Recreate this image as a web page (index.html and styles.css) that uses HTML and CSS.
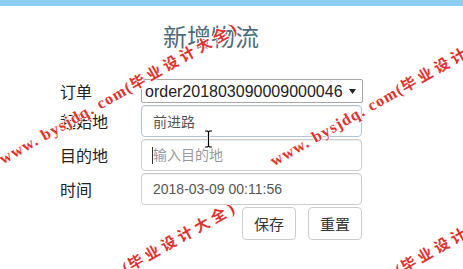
FILE: index.html
```html
<!DOCTYPE html>
<html lang="zh-CN">
<head>
    <meta charset="UTF-8">
    <meta name="viewport" content="width=device-width, initial-scale=1.0">
    <title>新增物流</title>
    <link rel="stylesheet" href="styles.css">
</head>
<body>

<div class="topbar"></div>

<div class="page">
    <h2 class="title">新增物流</h2>

    <form class="logistics-form" onsubmit="return false">
        <label for="order">订单</label>
        <div class="select-wrap">
            <select id="order" class="order-select">
                <option>order201803090009000046</option>
            </select>
            <svg class="select-arrow" width="7" height="5" viewBox="0 0 7 5"><path d="M0 0h7L3.5 5z" fill="#222"/></svg>
        </div>

        <label for="from">起始地</label>
        <input type="text" id="from" class="form-control is-hover" value="前进路">

        <label for="to">目的地</label>
        <div class="field">
            <input type="text" id="to" class="form-control" placeholder="输入目的地">
            <span class="caret"></span>
        </div>

        <label for="time">时间</label>
        <input type="text" id="time" class="form-control" value="2018-03-09 00:11:56">

        <div class="actions">
            <button type="submit" class="btn">保存</button>
            <button type="reset" class="btn">重置</button>
        </div>
    </form>
</div>

<!-- marca d'agua do site -->
<div class="watermarks">
    <span class="wm wm-1">www. bysjdq. com(<span class="wm-cn">毕业设计大全</span>)</span>
    <span class="wm wm-2">www. bysjdq. com(<span class="wm-cn">毕业设计大全</span>)</span>
    <span class="wm wm-3">www. bysjdq. com(<span class="wm-cn">毕业设计大全</span>)</span>
    <span class="wm wm-4">www. bysjdq. com(<span class="wm-cn">毕业设计大全</span>)</span>
    <svg class="ibeam" width="9" height="18" viewBox="0 0 9 18">
        <path d="M1 1h2.5l1 1 1-1H8M4.5 2v14M1 17h2.5l1-1 1 1H8" fill="none" stroke="#fff" stroke-width="3"/>
        <path d="M1 1h2.5l1 1 1-1H8M4.5 2v14M1 17h2.5l1-1 1 1H8" fill="none" stroke="#000" stroke-width="1.2"/>
    </svg>
</div>

</body>
</html>
```

FILE: styles.css
```css
body {
    margin: 0;
    font-family: "Liberation Sans", "Noto Sans CJK SC", Arial, sans-serif;
    font-size: 16px;
    color: #333;
    background-color: #fff;
    position: relative;
    height: 269px;
}
.topbar {
    height: 6px;
    background-color: #89cdf1; /* faixa azul do topo */
}
.page {
    width: 302px;
    margin-left: 60px;
}
.title {
    margin: 17px 0 0;
    font-size: 24px;
    font-weight: normal;
    line-height: 30px;
    text-align: center;
    color: #4f6b79;
}
.logistics-form {
    display: grid;
    grid-template-columns: 81px 221px;
    row-gap: 2px;
    align-items: center;
    margin-top: 26px;
}
.logistics-form label {
    font-size: 16px;
    color: #222;
}
.select-wrap {
    position: relative;
}
.order-select {
    -webkit-appearance: none;
    appearance: none;
    width: 222px;
    height: 24px;
    padding: 0 0 0 3px;
    font-family: inherit;
    font-size: 16px;
    color: #222;
    background-color: #fff;
    border: 1px solid #a6a6a6;
    border-radius: 2px;
}
.select-arrow {
    position: absolute;
    right: 6px;
    top: 10px;
}
.form-control {
    width: 100%;
    height: 32px;
    padding: 0 11px;
    font-family: inherit;
    font-size: 14px;
    color: #555;
    background-color: #fff;
    border: 1px solid #ccc;
    border-radius: 4px;
    box-sizing: border-box;
    box-shadow: inset 0 1px 1px rgba(0, 0, 0, 0.075);
}
.form-control::placeholder {
    color: #999;
}
.form-control.is-hover {
    border-color: #b3c4d6;
}
.field {
    position: relative;
}
.caret {
    position: absolute;
    left: 11px;
    top: 8px;
    width: 1px;
    height: 17px;
    background-color: #333;
}
.actions {
    grid-column: 2;
    display: flex;
    justify-content: flex-end;
    gap: 12px;
}
.btn {
    height: 33px;
    padding: 0 11px;
    font-family: inherit;
    font-size: 15px;
    color: #333;
    background-color: #fff;
    border: 1px solid #ccc;
    border-radius: 4px;
    cursor: pointer;
}
.watermarks {
    position: absolute;
    top: 0;
    left: 0;
    right: 0;
    bottom: 0;
    overflow: hidden;
    pointer-events: none;
}
.wm {
    position: absolute;
    white-space: nowrap;
    font-family: "Liberation Serif", "Noto Sans CJK SC", serif;
    font-weight: bold;
    font-size: 16px;
    line-height: 18px;
    letter-spacing: 1.2px;
    color: #e2302c;
    transform-origin: 0 100%;
    transform: rotate(-29.5deg);
    text-shadow: 1px 0 0 #fff, -1px 0 0 #fff, 0 1px 0 #fff, 0 -1px 0 #fff;
}
.wm-cn {
    font-family: "Noto Sans CJK SC", sans-serif;
    font-size: 15px;
    letter-spacing: 4px;
}
.wm-1 { left: 5px; top: 149px; }
.wm-2 { left: 276px; top: 151px; }
.wm-3 { left: 3px; top: 329px; }
.wm-4 { left: 276px; top: 331px; }
.ibeam {
    position: absolute;
    left: 204px;
    top: 130px;
}
```
